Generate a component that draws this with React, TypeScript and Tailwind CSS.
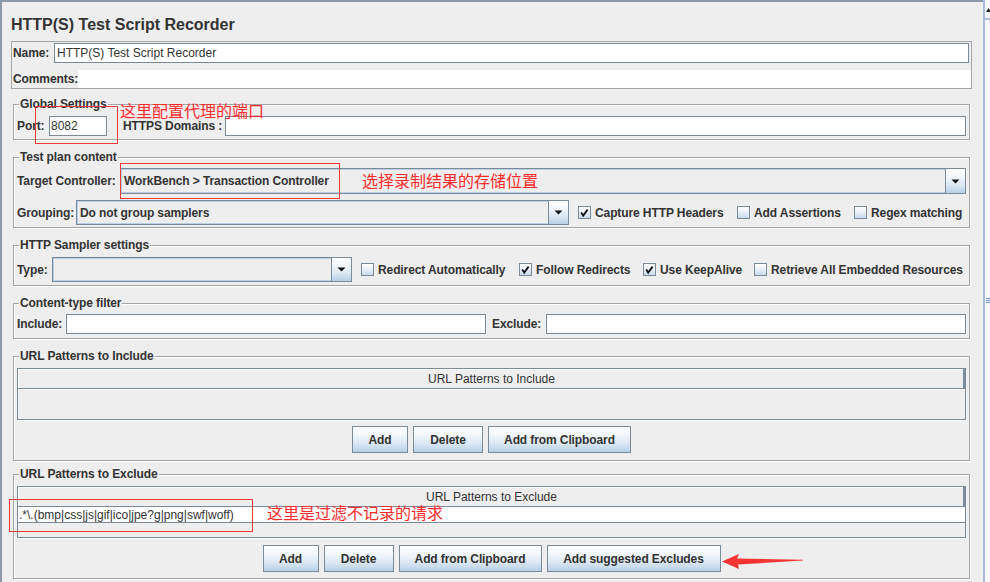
import React from "react";

const BTN_BG =
  "bg-[linear-gradient(to_bottom,#ffffff_0%,#f3f7fb_30%,#dde8f3_65%,#b8cfe5_100%)]";

function Legend({ children }: { children: React.ReactNode }) {
  return (
    <div className="-mt-[8px] ml-[2px] w-fit whitespace-nowrap bg-[#eeeeee] px-[1px] text-[12px] font-bold leading-[14px] tracking-[-0.1px]">
      {children}
    </div>
  );
}

function Group({
  legend,
  className,
  children,
}: {
  legend: string;
  className: string;
  children: React.ReactNode;
}) {
  return (
    <div
      className={`ml-[11px] mr-[13px] flex flex-col border border-[#a5a5a5] px-[3px] shadow-[inset_1px_1px_0_#ffffff,1px_1px_0_#ffffff] ${className}`}
    >
      <Legend>{legend}</Legend>
      {children}
    </div>
  );
}

function TextField({ className, value }: { className: string; value?: string }) {
  return (
    <div
      className={`flex items-center border border-[#7a8a99] bg-white text-[12px] font-normal leading-[14px] whitespace-nowrap overflow-hidden ${className}`}
    >
      {value}
    </div>
  );
}

function Arrow() {
  return (
    <div className={`flex h-full w-[20px] shrink-0 items-center justify-center border-l border-[#7a8a99] ${BTN_BG}`}>
      <svg width="9" height="5" viewBox="0 0 9 5">
        <polygon points="0.5,0.5 8.5,0.5 4.5,4.5" fill="#111" />
      </svg>
    </div>
  );
}

function Combo({ className, value }: { className: string; value?: string }) {
  return (
    <div
      className={`flex items-center border border-[#7a8a99] bg-[#eeeeee] shadow-[inset_1px_1px_0_#b8cfe5,inset_-1px_-1px_0_#b8cfe5] ${className}`}
    >
      <div className="flex-1 overflow-hidden whitespace-nowrap pl-[3px] text-[12px] font-bold leading-[14px] tracking-[-0.1px]">
        {value}
      </div>
      <Arrow />
    </div>
  );
}

function Check({ checked, label, className }: { checked?: boolean; label: string; className: string }) {
  return (
    <div className={`flex shrink-0 items-center ${className}`}>
      <div className="flex h-[13px] w-[13px] items-center justify-center border border-[#7a8a99] bg-[linear-gradient(to_bottom,#ffffff_0%,#eef3f9_40%,#c9daeb_100%)]">
        {checked && (
          <svg width="11" height="11" viewBox="0 0 11 11">
            <path d="M2.2 5.6 L4.2 8.6 L8.6 2.6" fill="none" stroke="#111" strokeWidth="1.8" />
          </svg>
        )}
      </div>
      <span className="ml-[4px] whitespace-nowrap text-[12px] font-bold leading-[14px] tracking-[-0.1px]">{label}</span>
    </div>
  );
}

function Button({ label, className }: { label: string; className: string }) {
  return (
    <div
      className={`flex h-[27px] items-center justify-center border border-[#7a8a99] text-[12px] font-bold leading-[14px] tracking-[-0.1px] ${BTN_BG} ${className}`}
    >
      {label}
    </div>
  );
}

const LBL = "whitespace-nowrap text-[12px] font-bold leading-[14px] tracking-[-0.1px]";

export default function App() {
  return (
    <div className="relative flex h-[582px] w-[990px] overflow-hidden bg-[#eeeeee] font-['Liberation_Sans',Arial,sans-serif] text-[#333333]">
      {/* main panel */}
      <div className="flex min-w-0 flex-1 flex-col border-l-2 border-t-2 border-[#8d99a6]">
        <div className="pl-[9px] pt-[14px] text-[16px] font-bold leading-[18px]">
          HTTP(S) Test Script Recorder
        </div>

        {/* Name / Comments */}
        <div className="ml-[9px] mr-[11px] mt-[7px] flex flex-col border border-[#a5a5a5] pt-[1px]">
          <div className="flex h-[20px] items-center pl-[1px] pr-[2px]">
            <div className={`w-[41px] ${LBL}`}>Name:</div>
            <TextField className="h-[20px] flex-1 pl-[2px]" value="HTTP(S) Test Script Recorder" />
          </div>
          <div className="mt-[7px] flex h-[18px] items-center pl-[1px]">
            <div className={`w-[65px] ${LBL}`}>Comments:</div>
            <div className="h-[18px] flex-1 bg-white" />
          </div>
        </div>

        {/* Global Settings */}
        <Group legend="Global Settings" className="mt-[15px] pb-[3px]">
          <div className="mt-[5px] flex h-[20px] items-center">
            <div className={`w-[32px] ${LBL}`}>Port:</div>
            <TextField className="h-[20px] w-[58px] pl-[1px]" value="8082" />
            <div className={`ml-[16px] w-[102px] ${LBL}`}>HTTPS Domains :</div>
            <TextField className="h-[20px] flex-1" />
          </div>
        </Group>

        {/* Test plan content */}
        <Group legend="Test plan content" className="mt-[17px] pb-[2px]">
          <div className="mt-[4px] flex h-[26px] items-center">
            <div className={`w-[103px] ${LBL}`}>Target Controller:</div>
            <Combo className="h-[26px] flex-1" value="WorkBench > Transaction Controller" />
          </div>
          <div className="mt-[6px] flex h-[25px] items-center">
            <div className={`w-[59px] ${LBL}`}>Grouping:</div>
            <Combo className="h-[25px] w-[493px] shrink-0" value="Do not group samplers" />
            <Check className="ml-[9px] w-[159px]" checked label="Capture HTTP Headers" />
            <Check className="w-[117px]" label="Add Assertions" />
            <Check className="flex-1" label="Regex matching" />
          </div>
        </Group>

        {/* HTTP Sampler settings */}
        <Group legend="HTTP Sampler settings" className="mt-[17px] pb-[3px]">
          <div className="mt-[5px] flex h-[25px] items-center">
            <div className={`w-[35px] ${LBL}`}>Type:</div>
            <Combo className="h-[25px] w-[300px] shrink-0" />
            <Check className="ml-[9px] w-[158px]" label="Redirect Automatically" />
            <Check className="w-[124px]" checked label="Follow Redirects" />
            <Check className="w-[111px]" checked label="Use KeepAlive" />
            <Check className="flex-1" label="Retrieve All Embedded Resources" />
          </div>
        </Group>

        {/* Content-type filter */}
        <Group legend="Content-type filter" className="mt-[17px] pb-[4px]">
          <div className="mt-[4px] flex h-[20px] items-center">
            <div className={`w-[49px] ${LBL}`}>Include:</div>
            <TextField className="h-[20px] flex-1" />
            <div className={`ml-[6px] w-[54px] ${LBL}`}>Exclude:</div>
            <TextField className="h-[20px] flex-1" />
          </div>
        </Group>

        {/* URL Patterns to Include */}
        <Group legend="URL Patterns to Include" className="mt-[17px] pb-[7px]">
          <div className="mt-[5px] flex flex-col border border-[#7a8a99] shadow-[0_1px_0_#ffffff]">
            <div className="flex h-[20px] items-center justify-center border-b border-[#7a8a99] text-[12px] leading-[14px] shadow-[inset_-2px_0_0_#7a8a99,inset_1px_1px_0_#ffffff]">
              URL Patterns to Include
            </div>
            <div className="h-[30px] shadow-[inset_0_1px_0_#ffffff]" />
          </div>
          <div className="mt-[6px] flex justify-center gap-[5px]">
            <Button label="Add" className="w-[56px]" />
            <Button label="Delete" className="w-[70px]" />
            <Button label="Add from Clipboard" className="w-[143px]" />
          </div>
        </Group>

        {/* URL Patterns to Exclude */}
        <Group legend="URL Patterns to Exclude" className="mt-[13px] pb-[6px]">
          <div className="mt-[5px] flex flex-col border border-[#7a8a99] shadow-[0_1px_0_#ffffff]">
            <div className="flex h-[20px] items-center justify-center border-b border-[#7a8a99] text-[12px] leading-[14px] shadow-[inset_-2px_0_0_#7a8a99,inset_1px_1px_0_#ffffff]">
              URL Patterns to Exclude
            </div>
            <div className="flex h-[16px] items-center border-b border-[#7a8a99] bg-white pl-[1px] text-[12px] leading-[14px]">
              .*\.(bmp|css|js|gif|ico|jpe?g|png|swf|woff)
            </div>
            <div className="h-[14px]" />
          </div>
          <div className="mt-[7px] flex justify-center gap-[5px]">
            <Button label="Add" className="w-[56px]" />
            <Button label="Delete" className="w-[70px]" />
            <Button label="Add from Clipboard" className="w-[143px]" />
            <Button label="Add suggested Excludes" className="w-[174px]" />
          </div>
        </Group>
      </div>

      {/* right scrollbar strip */}
      <div className="flex w-[7px] shrink-0 flex-col border-l-2 border-[#a9bbd6] bg-[#f4f7fb] pt-[8px]">
        <svg width="5" height="4" viewBox="0 0 5 4" className="ml-[1px]">
          <polygon points="0,4 5,4 2.5,0" fill="#222" />
        </svg>
        <div className="mt-[6px] h-[2px] bg-[#a9bbd6]" />
        <div className="mt-[278px] flex flex-col gap-[1px] pl-[1px]">
          <div className="h-px w-[4px] bg-[#6d8fc4]" />
          <div className="h-px w-[4px] bg-[#6d8fc4]" />
          <div className="h-px w-[4px] bg-[#6d8fc4]" />
        </div>
      </div>

      {/* red annotations (overlay) */}
      <div className="pointer-events-none absolute left-[35px] top-[106px] h-[38px] w-[83px] border border-[#f03a3a]" />
      <div className="pointer-events-none absolute left-[120px] top-[103px] whitespace-nowrap font-['Noto_Sans_CJK_SC',sans-serif] text-[16px] leading-[14px] text-[#ff2b2b]">
        这里配置代理的端口
      </div>
      <div className="pointer-events-none absolute left-[120px] top-[163px] h-[36px] w-[220px] border border-[#f03a3a]" />
      <div className="pointer-events-none absolute left-[362px] top-[173px] whitespace-nowrap font-['Noto_Sans_CJK_SC',sans-serif] text-[16px] leading-[14px] text-[#ff2b2b]">
        选择录制结果的存储位置
      </div>
      <div className="pointer-events-none absolute left-[9px] top-[499px] h-[33px] w-[244px] border border-[#f03a3a]" />
      <div className="pointer-events-none absolute left-[267px] top-[505px] whitespace-nowrap font-['Noto_Sans_CJK_SC',sans-serif] text-[16px] leading-[14px] text-[#ff2b2b]">
        这里是过滤不记录的请求
      </div>
      <svg
        className="pointer-events-none absolute left-[720px] top-[552px]"
        width="86"
        height="19"
        viewBox="0 0 86 19"
      >
        <polygon points="2,9.5 19,2 17,6.5 83,7.8 83,8.6 18,12.5 19,17" fill="#f53434" />
      </svg>
    </div>
  );
}
